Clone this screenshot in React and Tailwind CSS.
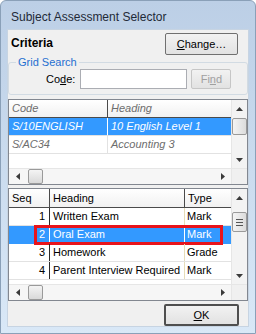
const UI = { fontFamily: '"Liberation Sans", Arial, sans-serif' };

function Arrow({ dir, className = '' }) {
  const pts = {
    up: '0,4 3.5,0 7,4',
    down: '0,0 3.5,4 7,0',
    left: '4,0 0,3.5 4,7',
    right: '0,0 4,3.5 0,7',
  }[dir];
  const vertical = dir === 'up' || dir === 'down';
  return (
    <svg width={vertical ? 7 : 4} height={vertical ? 4 : 7} className={className}>
      <polygon points={pts} fill="#3b3b3b" />
    </svg>
  );
}

function VScroll({ thumbTop, thumbH, grip }) {
  return (
    <div className="w-[16px] flex flex-col items-center bg-[#f3f3f3] border-l border-[#e6e6e6]">
      <div className="h-[17px] flex items-center justify-center shrink-0">
        <Arrow dir="up" />
      </div>
      <div className="flex-1 w-full relative">
        <div
          className="absolute left-[0px] w-[15px] rounded-[2px] border border-[#9a9a9a] bg-gradient-to-r from-[#f4f4f4] to-[#dcdcdc] flex flex-col items-center justify-center gap-[2px]"
          style={{ top: thumbTop, height: thumbH }}
        >
          {grip && (
            <>
              <div className="w-[7px] h-[1px] bg-[#555]" />
              <div className="w-[7px] h-[1px] bg-[#555]" />
              <div className="w-[7px] h-[1px] bg-[#555]" />
            </>
          )}
        </div>
      </div>
      <div className="h-[17px] flex items-center justify-center shrink-0">
        <Arrow dir="down" />
      </div>
    </div>
  );
}

function HScroll() {
  return (
    <div className="flex h-[16px] border-t border-[#e6e6e6]">
      <div className="flex-1 flex items-center bg-[#f6f6f6]">
        <div className="w-[17px] flex justify-center shrink-0">
          <Arrow dir="left" />
        </div>
        <div className="w-[15px] h-[15px] ml-[2px] rounded-[2px] border border-[#9a9a9a] bg-gradient-to-b from-[#f4f4f4] to-[#d9d9d9]" />
        <div className="flex-1" />
        <div className="w-[17px] flex justify-center shrink-0">
          <Arrow dir="right" />
        </div>
      </div>
      <div className="w-[16px] bg-[#f0f0f0] border-l border-[#e6e6e6]" />
    </div>
  );
}

function Button({ children, className = '', disabled, def }) {
  return (
    <div
      className={`flex items-center justify-center rounded-[2px] text-[11px] bg-gradient-to-b from-[#f2f2f2] to-[#e2e2e2] ${
        def ? 'border-2 border-[#4f4f4f]' : disabled ? 'border border-[#c6c6c6] text-[#a0a0a0]' : 'border border-[#707070] text-black'
      } ${className}`}
    >
      {children}
    </div>
  );
}

export default function App() {
  const rows = [
    { seq: 1, heading: 'Written Exam', type: 'Mark' },
    { seq: 2, heading: 'Oral Exam', type: 'Mark', sel: true },
    { seq: 3, heading: 'Homework', type: 'Grade' },
    { seq: 4, heading: 'Parent Interview Required', type: 'Mark' },
  ];

  return (
    <div
      className="w-[256px] h-[334px] rounded-t-[6px] border border-[#8aa0b8] bg-gradient-to-b from-[#bccfe6] to-[#d9e8f7] flex flex-col overflow-hidden"
      style={UI}
    >
      <div className="h-[28px] pl-[10px] pt-[9px] text-[12px] leading-[15px] text-[#1f2a38]">
        Subject Assessment Selector
      </div>

      <div className="ml-[6px] w-[242px] h-[298px] bg-[#f0f0f0] border border-[#c7d4e2] flex flex-col px-[0px]">
        {/* criteria row */}
        <div className="h-[25px] flex justify-between shrink-0">
          <div className="pl-[3px] pt-[6px] text-[12px] leading-[14px] font-bold text-black">Criteria</div>
          <Button className="mt-[3px] mr-[10px] w-[73px] h-[22px]">
            <span>
              <span className="underline">C</span>hange…
            </span>
          </Button>
        </div>

        {/* group box */}
        <fieldset className="border border-[#d2dbe3] rounded-[3px] h-[40px] shrink-0">
          <legend className="ml-[7px] px-[2px] text-[11px] leading-[14px] text-[#1f6fd0]">Grid Search</legend>
          <div className="flex items-center">
            <div className="ml-[37px] text-[11px] text-black">
              Co<span className="underline">d</span>e:
            </div>
            <div className="ml-[5px] w-[107px] h-[20px] bg-white border border-[#abadb3]" />
            <Button disabled className="ml-[4px] w-[40px] h-[20px]">
              <span>
                Fi<span className="underline">n</span>d
              </span>
            </Button>
          </div>
        </fieldset>

        {/* grid 1 */}
        <div className="mt-[4px] h-[86px] border border-[#828790] bg-white flex flex-col shrink-0">
          <div className="flex flex-1">
            <div className="flex-1 flex flex-col text-[11px] italic">
              <div className="h-[18px] flex border-b border-[#4a4a4a] bg-gradient-to-b from-[#ffffff] to-[#f1f1f1] text-[#6d6d6d]">
                <div className="w-[99px] border-r border-[#4a4a4a] pl-[3px] leading-[17px]">Code</div>
                <div className="flex-1 pl-[3px] leading-[17px]">Heading</div>
              </div>
              <div className="h-[18px] flex bg-[#3399ff] text-white border-b border-[#e2e2e2]">
                <div className="w-[99px] border-r border-white pl-[3px] leading-[17px]">S/10ENGLISH</div>
                <div className="flex-1 pl-[3px] leading-[17px]">10 English Level 1</div>
              </div>
              <div className="h-[18px] flex text-[#6d6d6d] border-b border-[#e2e2e2]">
                <div className="w-[99px] border-r border-[#e2e2e2] pl-[3px] leading-[17px]">S/AC34</div>
                <div className="flex-1 pl-[3px] leading-[17px]">Accounting 3</div>
              </div>
            </div>
            <VScroll thumbTop={1} thumbH={17} />
          </div>
          <HScroll />
        </div>

        {/* grid 2 */}
        <div className="mt-[3px] h-[113px] border border-[#828790] bg-white flex flex-col shrink-0">
          <div className="flex flex-1">
            <div className="flex-1 flex flex-col text-[11px] text-black">
              <div className="h-[19px] flex border-b border-[#4a4a4a] bg-gradient-to-b from-[#ffffff] to-[#f1f1f1]">
                <div className="w-[41px] border-r border-[#4a4a4a] pl-[3px] leading-[18px]">Seq</div>
                <div className="w-[135px] border-r border-[#4a4a4a] pl-[3px] leading-[18px]">Heading</div>
                <div className="flex-1 pl-[3px] leading-[18px]">Type</div>
              </div>
              {rows.map((r) => (
                <div
                  key={r.seq}
                  className={`relative h-[18px] flex border-b ${
                    r.sel ? 'bg-[#3399ff] text-white border-[#3399ff]' : 'border-[#e2e2e2]'
                  }`}
                >
                  <div className={`w-[41px] border-r text-right pr-[4px] leading-[17px] ${r.sel ? 'border-white' : 'border-[#2a2a2a]'}`}>
                    {r.seq}
                  </div>
                  <div className={`w-[135px] border-r pl-[3px] leading-[17px] ${r.sel ? 'border-white' : 'border-[#e6dcb8]'}`}>
                    {r.heading}
                  </div>
                  <div className="flex-1 pl-[2px] leading-[17px]">{r.type}</div>
                  {r.sel && (
                    <div className="absolute left-[25px] right-[8px] top-[-1px] bottom-[-2px] border-[3px] border-[#e8141b]" />
                  )}
                </div>
              ))}
            </div>
            <VScroll thumbTop={6} thumbH={20} grip />
          </div>
          <HScroll />
        </div>

        {/* OK */}
        <div className="flex justify-end mt-[3px]">
          <Button def className="mr-[9px] w-[75px] h-[22px]">
            <span>
              <span className="underline">O</span>K
            </span>
          </Button>
        </div>
      </div>
    </div>
  );
}
